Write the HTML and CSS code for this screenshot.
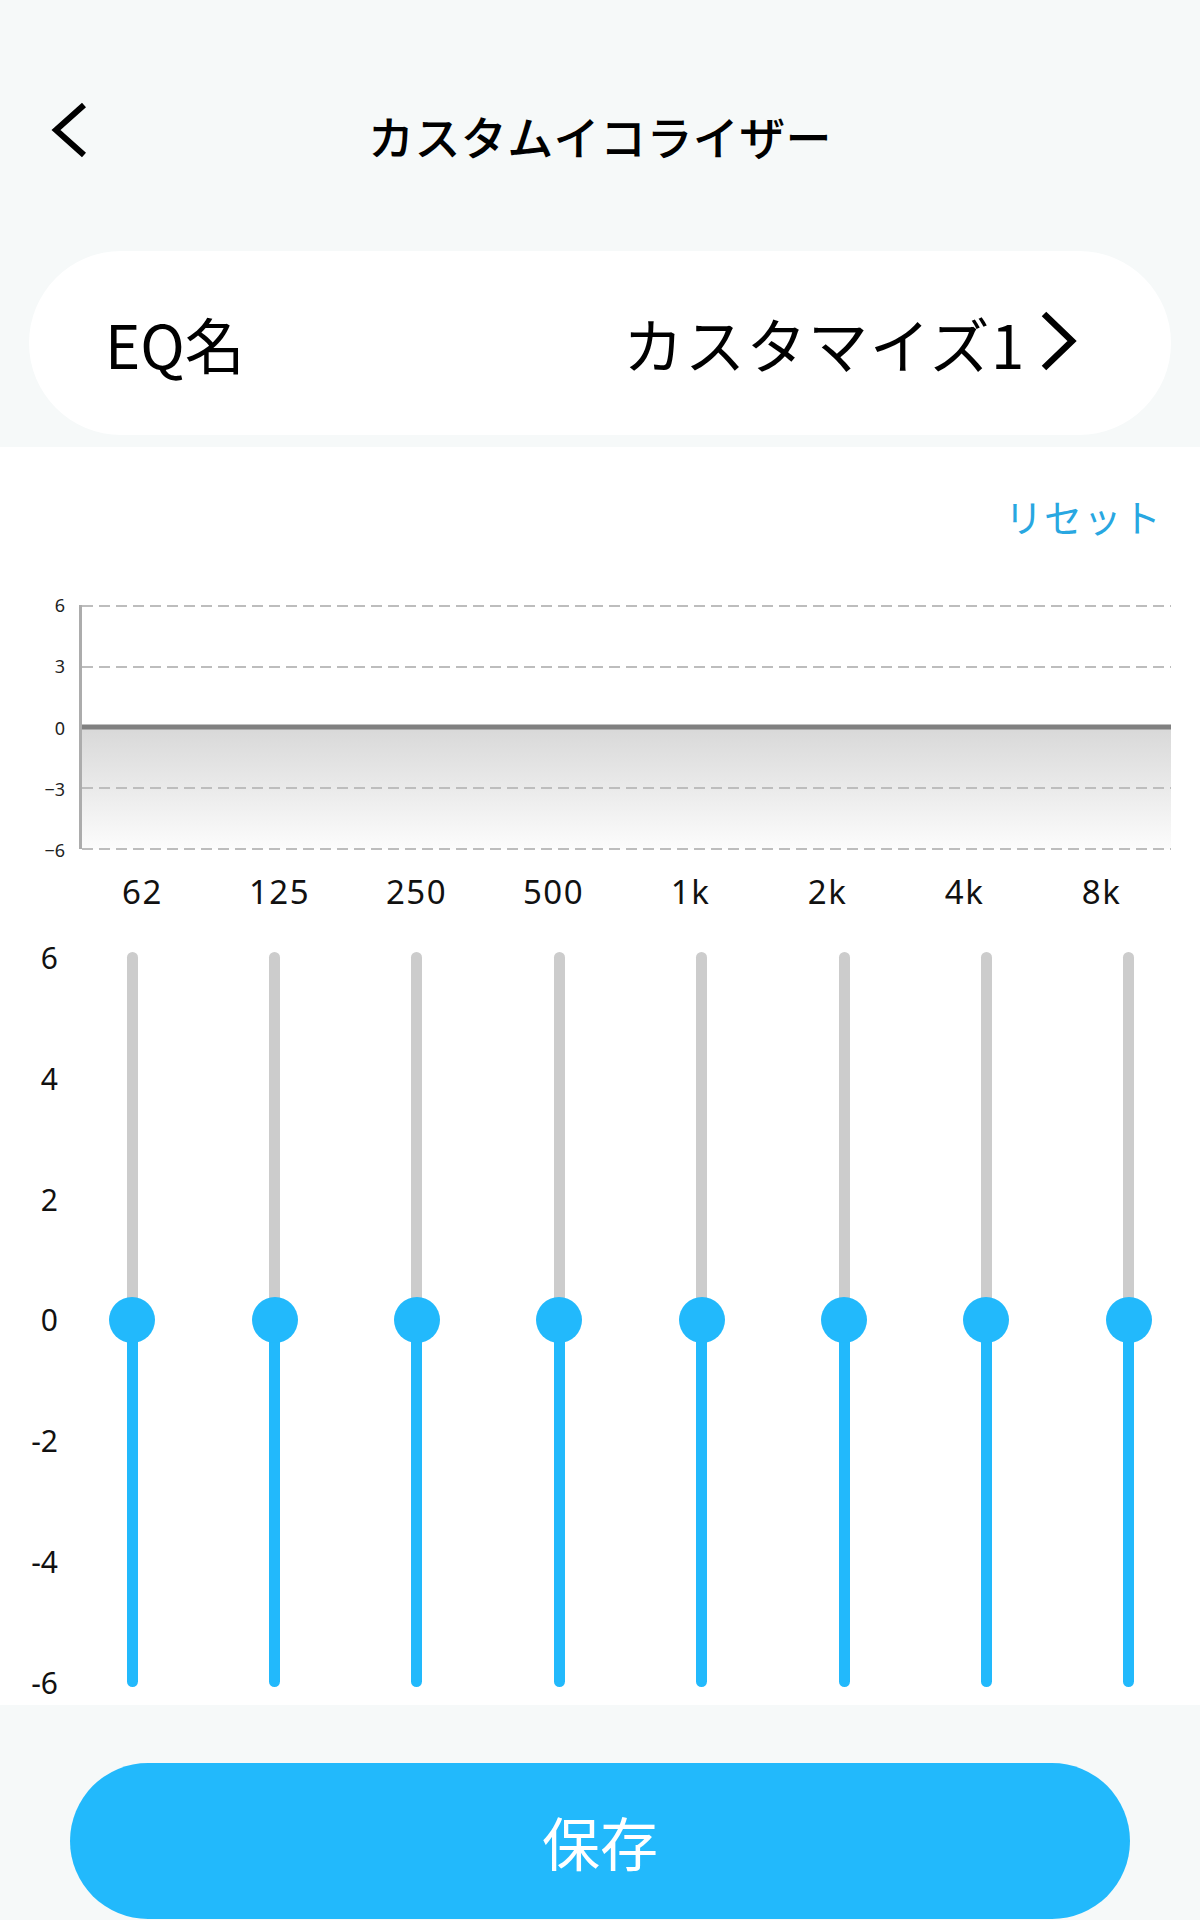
FILE: index.html
```html
<!DOCTYPE html>
<html lang="ja">
<head>
<meta charset="utf-8">
<title>カスタムイコライザー</title>
<link rel="stylesheet" href="styles.css">
</head>
<body>
<div class="page">
  <header class="header">
    <div class="header-left">
      <svg class="back-icon" width="40" height="60" viewBox="0 0 40 60"><path d="M34 3 L6 28 L34 53" fill="none" stroke="#000" stroke-width="6" stroke-linejoin="miter"/></svg>
    </div>
    <h1 class="title">カスタムイコライザー</h1>
    <div class="header-right"></div>
  </header>

  <div class="name-card">
    <span class="name-label">EQ名</span>
    <span class="name-value"><span class="name-text">カスタマイズ1</span><svg class="chev-icon" width="40" height="60" viewBox="0 0 40 60"><path d="M6 3 L34 30 L6 57" fill="none" stroke="#000" stroke-width="6.5"/></svg></span>
  </div>

  <section class="eq-panel">
    <div class="reset-row"><span class="reset">リセット</span></div>

    <div class="chart">
      <div class="chart-axis">
        <span>6</span><span>3</span><span>0</span><span>−3</span><span>−6</span>
      </div>
      <svg class="chart-plot" width="1092" height="245" viewBox="0 0 1092 245">
        <defs>
          <linearGradient id="fillGrad" x1="0" y1="0" x2="0" y2="1">
            <stop offset="0" stop-color="#d8d8d8"/>
            <stop offset="1" stop-color="#fcfcfc"/>
          </linearGradient>
        </defs>
        <rect x="1" y="122" width="1091" height="122" fill="url(#fillGrad)"/>
        <g stroke="#bdbdbd" stroke-width="2" stroke-dasharray="11 6">
          <line x1="3" y1="1" x2="1092" y2="1"/>
          <line x1="3" y1="62" x2="1092" y2="62"/>
          <line x1="3" y1="183" x2="1092" y2="183"/>
          <line x1="3" y1="244" x2="1092" y2="244"/>
        </g>
        <line x1="1.5" y1="0" x2="1.5" y2="244" stroke="#acacac" stroke-width="3"/>
        <line x1="3" y1="122" x2="1092" y2="122" stroke="#808080" stroke-width="5"/>
      </svg>
    </div>

    <div class="freq-row">
      <span>62</span><span>125</span><span>250</span><span>500</span><span>1k</span><span>2k</span><span>4k</span><span>8k</span>
    </div>

    <div class="sliders">
      <div class="slider-axis">
        <span>6</span><span>4</span><span>2</span><span>0</span><span>-2</span><span>-4</span><span>-6</span>
      </div>
      <div class="slider-grid">
        <div class="slider"><div class="track"><div class="track-up"></div><div class="track-down"></div><div class="thumb"></div></div></div>
        <div class="slider"><div class="track"><div class="track-up"></div><div class="track-down"></div><div class="thumb"></div></div></div>
        <div class="slider"><div class="track"><div class="track-up"></div><div class="track-down"></div><div class="thumb"></div></div></div>
        <div class="slider"><div class="track"><div class="track-up"></div><div class="track-down"></div><div class="thumb"></div></div></div>
        <div class="slider"><div class="track"><div class="track-up"></div><div class="track-down"></div><div class="thumb"></div></div></div>
        <div class="slider"><div class="track"><div class="track-up"></div><div class="track-down"></div><div class="thumb"></div></div></div>
        <div class="slider"><div class="track"><div class="track-up"></div><div class="track-down"></div><div class="thumb"></div></div></div>
        <div class="slider"><div class="track"><div class="track-up"></div><div class="track-down"></div><div class="thumb"></div></div></div>
      </div>
    </div>
  </section>

  <footer class="footer">
    <button class="save-btn">保存</button>
  </footer>
</div>
</body>
</html>
```

FILE: styles.css
```css
* { box-sizing: border-box; }
html, body {
  margin: 0;
  padding: 0;
  background: #f6f9f9;
}
body {
  width: 1200px;
  height: 1920px;
  overflow: hidden;
  font-family: "Noto Sans CJK JP", "Noto Sans", sans-serif;
  color: #000;
}
.page {
  display: flex;
  flex-direction: column;
}

/* header */
.header {
  height: 251px;
  padding: 97px 0 78px;
  display: grid;
  grid-template-columns: 1fr auto 1fr;
  align-items: center;
}
.header-left {
  display: flex;
  align-items: center;
  padding-left: 50px;
}
.back-icon { display: block; margin-top: -6px; }
.title {
  margin: 0;
  font-size: 46px;
  line-height: 76px;
  font-weight: 500;
  letter-spacing: 0.4px;
  white-space: nowrap;
}

/* name card */
.name-card {
  margin: 0 29px 12px;
  height: 184px;
  background: #fff;
  border-radius: 92px;
  display: flex;
  align-items: center;
  justify-content: space-between;
  padding: 0 93px 0 76px;
  font-size: 60px;
  line-height: 80px;
}
.name-value {
  display: flex;
  align-items: center;
}
.name-text {
  letter-spacing: 1.6px;
}
.chev-icon {
  display: block;
  margin-left: 12px;
  margin-top: -4px;
}

/* eq panel */
.eq-panel {
  background: #fff;
  padding: 47px 0 2px;
  height: 1258px;
}
.reset-row {
  display: flex;
  justify-content: flex-end;
  padding-right: 38px;
}
.reset {
  font-size: 38px;
  line-height: 44px;
  letter-spacing: 1.3px;
  color: #28a7e1;
}

.chart {
  display: flex;
  margin-top: 67px;
  height: 245px;
}
.chart-axis {
  width: 79px;
  height: 265px;
  margin: -10px 0;
  padding-right: 14px;
  display: flex;
  flex-direction: column;
  justify-content: space-between;
  align-items: flex-end;
  font-family: "Noto Sans", sans-serif;
  font-size: 18px;
  line-height: 20px;
  color: #222;
}
.chart-plot { display: block; flex: none; }

.freq-row {
  margin: 22px 30px 0 74px;
  display: grid;
  grid-template-columns: repeat(8, 1fr);
  justify-items: center;
  font-family: "Noto Sans", sans-serif;
  font-size: 33px;
  line-height: 40px;
  letter-spacing: 1.5px;
  color: #111;
}

.sliders {
  margin-top: 26px;
  display: flex;
}
.slider-axis {
  width: 61px;
  height: 765px;
  padding-right: 3px;
  display: flex;
  flex-direction: column;
  justify-content: space-between;
  align-items: flex-end;
  font-family: "Noto Sans", sans-serif;
  font-size: 30px;
  line-height: 40px;
  color: #111;
}
.slider-grid {
  flex: 1;
  display: grid;
  grid-template-columns: repeat(8, 1fr);
}
.slider {
  display: flex;
  justify-content: center;
  padding-top: 14px;
}
.track {
  position: relative;
  width: 11px;
  height: 735px;
  display: flex;
  flex-direction: column;
}
.track-up {
  flex: 1;
  background: #cccccc;
  border-radius: 6px 6px 0 0;
}
.track-down {
  flex: 1;
  background: #22b9fc;
  border-radius: 0 0 6px 6px;
}
.thumb {
  position: absolute;
  left: 50%;
  top: 50%;
  width: 46px;
  height: 46px;
  margin: -23px 0 0 -23px;
  border-radius: 50%;
  background: #22b9fc;
}

/* footer */
.footer {
  padding: 58px 70px 0;
}
.save-btn {
  display: block;
  width: 100%;
  height: 156px;
  border: 0;
  border-radius: 78px;
  background: #22b9fc;
  color: #fff;
  font-family: "Noto Sans CJK JP", sans-serif;
  font-size: 58px;
  line-height: 1;
  padding: 0;
}
```
